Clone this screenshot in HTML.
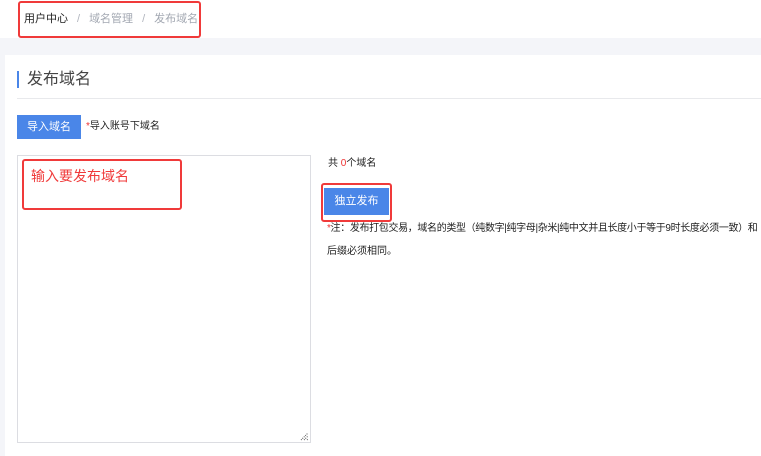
<!DOCTYPE html>
<html><head><meta charset="utf-8"><style>
*{margin:0;padding:0;box-sizing:border-box}
body{width:761px;height:456px;overflow:hidden;background:#fff;font-family:"Liberation Sans","Noto Sans CJK SC",sans-serif;position:relative}
.a{position:absolute}
</style></head><body>
<div class="a" style="left:0;top:38px;width:761px;height:17px;background:#f4f5f9"></div>
<div class="a" style="left:0;top:55px;width:5px;height:401px;background:#f4f5f9"></div>
<div class="a" style="left:18px;top:1px;width:183px;height:37px;border:2px solid #f03a3a;border-radius:3px"></div>
<div class="a" style="left:24px;top:12px;font-size:11px;line-height:14px;white-space:nowrap"><span style="color:#222">用户中心</span><span style="color:#b0b4bd;margin:0 9px">/</span><span style="color:#a3a8b2">域名管理</span><span style="color:#b0b4bd;margin:0 9px">/</span><span style="color:#a3a8b2">发布域名</span></div>
<div class="a" style="left:17px;top:71px;width:2px;height:17px;background:#4a86e8"></div>
<div class="a" style="left:27px;top:70px;font-size:16px;line-height:20px;color:#444">发布域名</div>
<div class="a" style="left:17px;top:98px;width:744px;height:1px;background:#e8e9ec"></div>
<div class="a" style="left:17px;top:115px;width:64px;height:24px;background:#4a86e8;color:#fff;font-size:11px;line-height:24px;text-align:center">导入域名</div>
<div class="a" style="left:86px;top:121px;font-size:10px;line-height:12px;color:#222"><span style="color:#e33">*</span>导入账号下域名</div>
<div class="a" style="left:17px;top:155px;width:294px;height:288px;border:1px solid #dcdde2"></div>
<svg class="a" style="left:300px;top:432px" width="9" height="9"><path d="M1 8L8 1M4 8L8 4M7 8L8 7" stroke="#555" stroke-width="1" stroke-dasharray="1 1"/></svg>
<div class="a" style="left:22px;top:159px;width:160px;height:51px;border:2px solid #f03a3a;border-radius:3px"></div>
<div class="a" style="left:31px;top:167px;font-size:14px;line-height:18px;color:#f03a3a">输入要发布域名</div>
<div class="a" style="left:328px;top:158px;font-size:10px;line-height:12px;color:#222">共 <span style="color:#e33">0</span>个域名</div>
<div class="a" style="left:321px;top:183px;width:71px;height:39px;border:2px solid #f03a3a;border-radius:3px"></div>
<div class="a" style="left:324px;top:188px;width:65px;height:27px;background:#4a86e8;color:#fff;font-size:11px;line-height:27px;text-align:center">独立发布</div>
<div class="a" style="left:327px;top:223px;font-size:10px;line-height:12px;color:#222;white-space:nowrap;letter-spacing:-0.35px"><span style="color:#e33">*</span>注：发布打包交易，域名的类型（纯数字|纯字母|杂米|纯中文并且长度小于等于9时长度必须一致）和</div>
<div class="a" style="left:327px;top:246px;font-size:10px;line-height:12px;color:#222">后缀必须相同。</div>
</body></html>
